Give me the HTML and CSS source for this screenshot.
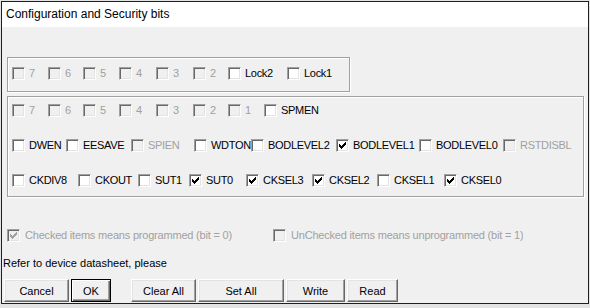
FILE: index.html
```html
<!DOCTYPE html>
<html lang="en">
<head>
    <meta charset="UTF-8">
    <title>Configuration and Security bits</title>
    <link rel="stylesheet" href="styles.css">
</head>
<body>
    <div class="dialog">
        <div class="titlebar">Configuration and Security bits</div>

        <div class="client">
            <!-- Lock bits -->
            <div class="group group-lock">
                <div class="row row-lock">
                    <label class="cb disabled"><span class="box"></span>7</label>
                    <label class="cb disabled"><span class="box"></span>6</label>
                    <label class="cb disabled"><span class="box"></span>5</label>
                    <label class="cb disabled"><span class="box"></span>4</label>
                    <label class="cb disabled"><span class="box"></span>3</label>
                    <label class="cb disabled"><span class="box"></span>2</label>
                    <label class="cb"><span class="box"></span>Lock2</label>
                    <label class="cb"><span class="box"></span>Lock1</label>
                </div>
            </div>

            <!-- Fuse bits -->
            <div class="group group-fuse">
                <div class="row row-bits">
                    <label class="cb disabled"><span class="box"></span>7</label>
                    <label class="cb disabled"><span class="box"></span>6</label>
                    <label class="cb disabled"><span class="box"></span>5</label>
                    <label class="cb disabled"><span class="box"></span>4</label>
                    <label class="cb disabled"><span class="box"></span>3</label>
                    <label class="cb disabled"><span class="box"></span>2</label>
                    <label class="cb disabled"><span class="box"></span>1</label>
                    <label class="cb"><span class="box"></span>SPMEN</label>
                </div>
                <div class="row row-high">
                    <label class="cb"><span class="box"></span>DWEN</label>
                    <label class="cb"><span class="box"></span>EESAVE</label>
                    <label class="cb disabled"><span class="box"></span>SPIEN</label>
                    <label class="cb"><span class="box"></span>WDTON</label>
                    <label class="cb"><span class="box"></span>BODLEVEL2</label>
                    <label class="cb"><span class="box"><svg viewBox="0 0 7 7"><path d="M0 2h1v1h1v1h1v-1h1v-1h1v-1h1v-1h1v3h-1v1h-1v1h-1v1h-1v1h-1v-1h-1v-1h-1z"/></svg></span>BODLEVEL1</label>
                    <label class="cb"><span class="box"></span>BODLEVEL0</label>
                    <label class="cb disabled"><span class="box"></span>RSTDISBL</label>
                </div>
                <div class="row row-low">
                    <label class="cb"><span class="box"></span>CKDIV8</label>
                    <label class="cb"><span class="box"></span>CKOUT</label>
                    <label class="cb"><span class="box"></span>SUT1</label>
                    <label class="cb"><span class="box"><svg viewBox="0 0 7 7"><path d="M0 2h1v1h1v1h1v-1h1v-1h1v-1h1v-1h1v3h-1v1h-1v1h-1v1h-1v1h-1v-1h-1v-1h-1z"/></svg></span>SUT0</label>
                    <label class="cb"><span class="box"><svg viewBox="0 0 7 7"><path d="M0 2h1v1h1v1h1v-1h1v-1h1v-1h1v-1h1v3h-1v1h-1v1h-1v1h-1v1h-1v-1h-1v-1h-1z"/></svg></span>CKSEL3</label>
                    <label class="cb"><span class="box"><svg viewBox="0 0 7 7"><path d="M0 2h1v1h1v1h1v-1h1v-1h1v-1h1v-1h1v3h-1v1h-1v1h-1v1h-1v1h-1v-1h-1v-1h-1z"/></svg></span>CKSEL2</label>
                    <label class="cb"><span class="box"></span>CKSEL1</label>
                    <label class="cb"><span class="box"><svg viewBox="0 0 7 7"><path d="M0 2h1v1h1v1h1v-1h1v-1h1v-1h1v-1h1v3h-1v1h-1v1h-1v1h-1v1h-1v-1h-1v-1h-1z"/></svg></span>CKSEL0</label>
                </div>
            </div>

            <div class="legend">
                <label class="cb disabled"><span class="box"><svg viewBox="0 0 7 7"><path d="M0 2h1v1h1v1h1v-1h1v-1h1v-1h1v-1h1v3h-1v1h-1v1h-1v1h-1v1h-1v-1h-1v-1h-1z"/></svg></span>Checked items means programmed (bit = 0)</label>
                <label class="cb disabled"><span class="box"></span>UnChecked items means unprogrammed (bit = 1)</label>
            </div>

            <p class="note">Refer to device datasheet, please</p>

            <div class="buttons">
                <button class="btn btn-cancel">Cancel</button>
                <button class="btn btn-default btn-ok">OK</button>
                <button class="btn btn-clear">Clear All</button>
                <button class="btn btn-set">Set All</button>
                <button class="btn btn-write">Write</button>
                <button class="btn btn-read">Read</button>
            </div>
        </div>
    </div>
</body>
</html>
```

FILE: styles.css
```css
* {
    box-sizing: border-box;
    margin: 0;
    padding: 0;
}

body {
    background-color: #e3e3e3;
    font-family: 'Liberation Sans', Arial, sans-serif;
    font-size: 11px;
    color: #000;
}

.dialog {
    width: 588px;
    height: 303px;
    margin: 1px 0 0 1px;
    border: 1px solid #1f1f1f;
    background-color: #f0f0f0;
    display: flex;
    flex-direction: column;
}

.titlebar {
    height: 25px;
    line-height: 25px;
    padding-left: 4px;
    background-color: #fff;
    font-size: 12px;
}

.client {
    flex: 1;
    display: flex;
    flex-direction: column;
    align-items: flex-start;
}

/* etched group frames */
.group {
    margin-left: 5px;
    padding-left: 4px;
    border: 1px solid #a0a0a0;
    box-shadow: inset 1px 1px #fff, 1px 1px #fff;
}

.group-lock {
    width: 343px;
    height: 35px;
    margin-top: 30px;
    padding-top: 9px;
}

.group-fuse {
    width: 577px;
    height: 101px;
    margin-top: 4px;
    padding-top: 7px;
    display: flex;
    flex-direction: column;
    gap: 22px;
}

.row {
    display: grid;
    height: 13px;
}

.row-lock {
    grid-template-columns: 36px 35px 36px 37px 37px 35px 59px auto;
}

.row-bits {
    grid-template-columns: 36px 35px 36px 37px 37px 35px 36px auto;
}

.row-high {
    grid-template-columns: 54px 65px 63px 57px 85px 83px 84px auto;
}

.row-low {
    grid-template-columns: 66px 60px 51px 57px 66px 65px 67px auto;
}

/* checkbox + caption */
.cb {
    display: flex;
    align-items: center;
    gap: 4px;
    height: 13px;
    line-height: 13px;
    letter-spacing: -0.3px;
    white-space: nowrap;
    overflow: hidden;
}

.cb.disabled {
    color: #a0a0a0;
}

.box {
    flex: none;
    width: 13px;
    height: 13px;
    padding: 2px;
    border: 1px solid;
    border-color: #a0a0a0 #fff #fff #a0a0a0;
    box-shadow: inset 1px 1px #696969, inset -1px -1px #e3e3e3;
    background-color: #fff;
}

.disabled .box {
    background-color: #f0f0f0;
}

.box svg {
    display: block;
    width: 7px;
    height: 7px;
    fill: #000;
    shape-rendering: crispEdges;
}

.disabled .box svg {
    fill: #a0a0a0;
}

.legend {
    display: grid;
    grid-template-columns: 266px auto;
    margin: 32px 0 0 5px;
}

.legend .cb {
    gap: 5px;
    letter-spacing: -0.2px;
}

.note {
    margin: 15px 0 0 1px;
    line-height: 13px;
}

/* classic push buttons */
.buttons {
    display: flex;
    gap: 2px;
    margin: 9px 0 0 2px;
}

.btn {
    height: 23px;
    border: 1px solid;
    border-color: #fff #696969 #696969 #fff;
    box-shadow: inset -1px -1px #a0a0a0, inset 1px 1px #e3e3e3;
    background-color: #f0f0f0;
    font: inherit;
    color: #000;
}

.btn-default {
    border-color: #000;
    box-shadow: inset 1px 1px #fff, inset -1px -1px #696969, inset -2px -2px #a0a0a0;
}

.btn-cancel { width: 65px; }
.btn-ok { width: 40px; }
.btn-clear { width: 65px; margin-left: 18px; }
.btn-set { width: 86px; }
.btn-write { width: 59px; }
.btn-read { width: 51px; }
```
